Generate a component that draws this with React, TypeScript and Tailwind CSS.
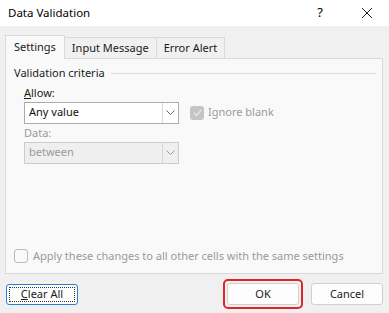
const FONT = { fontFamily: '"Segoe UI", "Noto Sans", "Open Sans", sans-serif' };

function Chevron({ color = '#555' }: { color?: string }) {
  return (
    <svg width="9" height="5" viewBox="0 0 9 5" fill="none">
      <path d="M0.5 0.5 L4.5 4.5 L8.5 0.5" stroke={color} strokeWidth="1" />
    </svg>
  );
}

function Combo({ value, disabled }: { value: string; disabled?: boolean }) {
  return (
    <div
      className={`flex h-[22px] w-[155px] border ${
        disabled ? 'border-[#cccccc] bg-[#efefef]' : 'border-[#acacac] bg-white'
      }`}
    >
      <div className={`flex flex-1 items-center pl-[4px] ${disabled ? 'text-[#9a9a9a]' : 'text-[#111]'}`}>
        {value}
      </div>
      <div
        className={`flex w-[16px] items-center justify-center border-l ${
          disabled ? 'border-[#d6d6d6]' : 'border-[#d9d9d9]'
        }`}
      >
        <Chevron color={disabled ? '#9a9a9a' : '#666'} />
      </div>
    </div>
  );
}

export default function App() {
  return (
    <div
      className="flex h-[313px] w-[389px] flex-col overflow-hidden bg-[#f0f0f0] text-[11px] text-[#1a1a1a]"
      style={FONT}
    >
      {/* title bar */}
      <div className="flex h-[26px] items-center bg-white pl-[8px]">
        <span className="flex-1 text-[11.5px] text-black">Data Validation</span>
        <span className="mr-[38px] text-[13px] text-black">?</span>
        <svg width="12" height="12" viewBox="0 0 12 12" className="mr-[16px]">
          <path d="M1 1 L11 11 M11 1 L1 11" stroke="#222" strokeWidth="1" />
        </svg>
      </div>

      <div className="flex flex-1 flex-col px-[5px] pt-[9px]">
        {/* tabs */}
        <div className="relative z-10 flex items-end">
          <div className="-mb-px flex h-[24px] items-center border border-b-0 border-[#d9d9d9] bg-[#f9f9f9] px-[8px]">
            Settings
          </div>
          <div className="ml-[-1px] flex h-[21px] items-center border border-b-0 border-[#d9d9d9] bg-[#f0f0f0] px-[7px]">
            Input Message
          </div>
          <div className="ml-[-1px] flex h-[21px] items-center border border-b-0 border-[#d9d9d9] bg-[#f0f0f0] px-[7px]">
            Error Alert
          </div>
        </div>

        {/* panel */}
        <div className="flex h-[216px] w-[378px] flex-col border border-[#d9d9d9] bg-[#f9f9f9] pl-[8px] pr-[6px]">
          <div className="mt-[6px] flex items-center">
            <span>Validation criteria</span>
            <div className="ml-[6px] h-px flex-1 bg-[#d9d9d9]" />
          </div>

          <div className="ml-[10px] mt-[2px]">
            <div className="h-[18px] leading-[18px]">
              <span className="underline">A</span>llow:
            </div>
            <div className="flex items-center">
              <Combo value="Any value" />
              <div className="ml-[11px] flex items-center">
                <div className="flex h-[14px] w-[14px] items-center justify-center rounded-[3px] bg-[#c5c5c5]">
                  <svg width="9" height="8" viewBox="0 0 9 8">
                    <path d="M1 4 L3.5 6.5 L8 1" stroke="#e9e9e9" strokeWidth="1.2" fill="none" />
                  </svg>
                </div>
                <span className="ml-[4px] text-[#9a9a9a]">Ignore blank</span>
              </div>
            </div>
            <div className="h-[18px] leading-[18px] text-[#9a9a9a]">Data:</div>
            <Combo value="between" disabled />
          </div>

          <div className="flex-1" />

          <div className="mb-[9px] flex items-center">
            <div className="h-[14px] w-[14px] rounded-[3px] border border-[#bdbdbd] bg-[#f9f9f9]" />
            <span className="ml-[5px] text-[#9a9a9a]">Apply these changes to all other cells with the same settings</span>
          </div>
        </div>

        {/* buttons */}
        <div className="mt-[5px] flex items-center">
          <div className="ml-px flex h-[21px] w-[72px] items-center justify-center rounded-[3px] border border-[#2f7fd0] bg-[#fdfdfd] p-[2px]">
            <div className="flex h-full w-full items-center justify-center border border-dotted border-[#333]">
              <span className="underline decoration-1">C</span>lear All
            </div>
          </div>
          <div className="flex-1" />
          <div className="rounded-[5px] border-2 border-[#e0242b] p-[2px]">
            <div className="flex h-[22px] w-[72px] items-center justify-center rounded-[3px] border border-[#d0d0d0] bg-[#fdfdfd]">
              OK
            </div>
          </div>
          <div className="ml-[8px] mr-[1px] flex h-[22px] w-[72px] items-center justify-center rounded-[3px] border border-[#d0d0d0] bg-[#fdfdfd]">
            Cancel
          </div>
        </div>
      </div>
    </div>
  );
}
